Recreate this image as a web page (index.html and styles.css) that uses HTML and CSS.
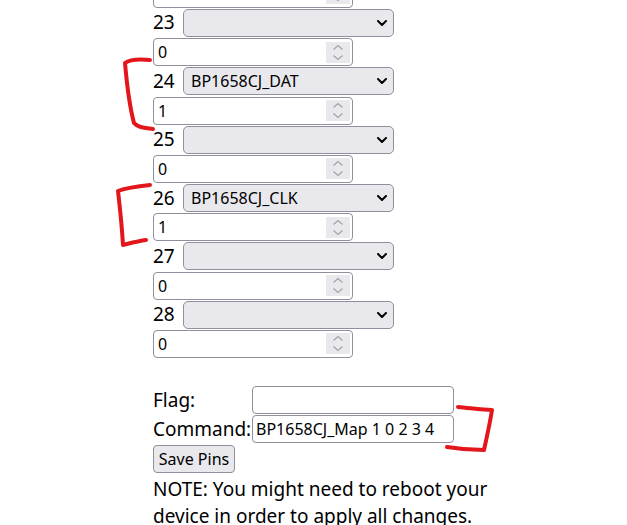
FILE: index.html
```html
<!DOCTYPE html>
<html>
  <head>
    <meta charset="UTF-8" />
    <title>Pins</title>
    <link rel="stylesheet" href="styles.css">
  </head>
  <body>
    <div class="page">
      <div class="pins">
        <div class="pin">
          <div class="pin-line">
            <span class="pin-num">22</span>
            <span class="select-wrap"><select class="role"><option></option></select><svg class="arrow" viewBox="0 0 10 6"><path d="M1 1l4 4 4-4" /></svg></span>
          </div>
          <div class="num-wrap"><input class="channel" type="text" value="0"><svg class="spin" viewBox="0 0 24 21"><path d="M7.5 7.5l4.5-4 4.5 4M7.5 13.5l4.5 4 4.5-4" /></svg></div>
        </div>
        <div class="pin">
          <div class="pin-line">
            <span class="pin-num">23</span>
            <span class="select-wrap"><select class="role"><option></option></select><svg class="arrow" viewBox="0 0 10 6"><path d="M1 1l4 4 4-4" /></svg></span>
          </div>
          <div class="num-wrap"><input class="channel" type="text" value="0"><svg class="spin" viewBox="0 0 24 21"><path d="M7.5 7.5l4.5-4 4.5 4M7.5 13.5l4.5 4 4.5-4" /></svg></div>
        </div>
        <div class="pin">
          <div class="pin-line">
            <span class="pin-num">24</span>
            <span class="select-wrap"><select class="role"><option>BP1658CJ_DAT</option></select><svg class="arrow" viewBox="0 0 10 6"><path d="M1 1l4 4 4-4" /></svg></span>
          </div>
          <div class="num-wrap"><input class="channel" type="text" value="1"><svg class="spin" viewBox="0 0 24 21"><path d="M7.5 7.5l4.5-4 4.5 4M7.5 13.5l4.5 4 4.5-4" /></svg></div>
        </div>
        <div class="pin">
          <div class="pin-line">
            <span class="pin-num">25</span>
            <span class="select-wrap"><select class="role"><option></option></select><svg class="arrow" viewBox="0 0 10 6"><path d="M1 1l4 4 4-4" /></svg></span>
          </div>
          <div class="num-wrap"><input class="channel" type="text" value="0"><svg class="spin" viewBox="0 0 24 21"><path d="M7.5 7.5l4.5-4 4.5 4M7.5 13.5l4.5 4 4.5-4" /></svg></div>
        </div>
        <div class="pin">
          <div class="pin-line">
            <span class="pin-num">26</span>
            <span class="select-wrap"><select class="role"><option>BP1658CJ_CLK</option></select><svg class="arrow" viewBox="0 0 10 6"><path d="M1 1l4 4 4-4" /></svg></span>
          </div>
          <div class="num-wrap"><input class="channel" type="text" value="1"><svg class="spin" viewBox="0 0 24 21"><path d="M7.5 7.5l4.5-4 4.5 4M7.5 13.5l4.5 4 4.5-4" /></svg></div>
        </div>
        <div class="pin">
          <div class="pin-line">
            <span class="pin-num">27</span>
            <span class="select-wrap"><select class="role"><option></option></select><svg class="arrow" viewBox="0 0 10 6"><path d="M1 1l4 4 4-4" /></svg></span>
          </div>
          <div class="num-wrap"><input class="channel" type="text" value="0"><svg class="spin" viewBox="0 0 24 21"><path d="M7.5 7.5l4.5-4 4.5 4M7.5 13.5l4.5 4 4.5-4" /></svg></div>
        </div>
        <div class="pin">
          <div class="pin-line">
            <span class="pin-num">28</span>
            <span class="select-wrap"><select class="role"><option></option></select><svg class="arrow" viewBox="0 0 10 6"><path d="M1 1l4 4 4-4" /></svg></span>
          </div>
          <div class="num-wrap"><input class="channel" type="text" value="0"><svg class="spin" viewBox="0 0 24 21"><path d="M7.5 7.5l4.5-4 4.5 4M7.5 13.5l4.5 4 4.5-4" /></svg></div>
        </div>
      </div>

      <div class="settings">
        <label class="field-label">Flag:</label>
        <input class="field" type="text" value="">
        <label class="field-label">Command:</label>
        <input class="field" type="text" value="BP1658CJ_Map 1 0 2 3 4">
      </div>
      <button class="save">Save Pins</button>
      <p class="note">NOTE: You might need to reboot your device in order to apply all changes.</p>
    </div>

    <!-- hand drawn marks on top of the form -->
    <svg class="marks" viewBox="0 0 627 525">
      <path d="M150 60C139 59 129 60 125 63C127 86 130 108 134 123C138 128 146 128 153 129" />
      <path d="M150 185C140 186 126 188 118 191C120 208 122 228 123 245C131 243 138 241 146 240" />
      <path d="M458 407C470 408 482 410 492 410C490 423 487 436 484 450C471 450 459 449 447 447" />
    </svg>
  </body>
</html>
```

FILE: styles.css
```css
body {
  margin: 0;
  font-family: 'Noto Sans', sans-serif;
  font-size: 19px;
  color: #000;
  background: #fff;
  overflow: hidden;
}
.page {
  padding-left: 153px;
}
.pins {
  margin-top: -50px;
}
.pin-line,
.num-wrap {
  height: 29.2px;
  display: flex;
  align-items: center;
}
.pin-num {
  width: 30px;
  line-height: 1;
}
.select-wrap {
  position: relative;
  display: block;
}
.role {
  appearance: none;
  display: block;
  width: 211px;
  height: 28px;
  padding: 0 30px 0 7px;
  font-family: 'Noto Sans', sans-serif;
  font-size: 16px;
  color: #000;
  background: #e9e9ed;
  border: 1px solid #8f8f9d;
  border-radius: 5px;
  outline: none;
}
.arrow {
  position: absolute;
  right: 7px;
  top: 11px;
  width: 10px;
  height: 6px;
  fill: none;
  stroke: #000;
  stroke-width: 2;
  stroke-linecap: round;
  stroke-linejoin: round;
}
.num-wrap {
  position: relative;
  width: 200px;
}
.channel {
  display: block;
  box-sizing: border-box;
  width: 200px;
  height: 28px;
  padding: 0 30px 0 4px;
  font-family: 'Noto Sans', sans-serif;
  font-size: 16px;
  color: #000;
  background: #fff;
  border: 1px solid #8f8f9d;
  border-radius: 4px;
  outline: none;
}
.spin {
  position: absolute;
  right: 3px;
  top: 4px;
  width: 24px;
  height: 21px;
  background: #e9e9ed;
  fill: none;
  stroke: #a3a3ae;
  stroke-width: 1.3;
}
.settings {
  display: grid;
  grid-template-columns: 99px 202px;
  grid-auto-rows: 29px;
  align-items: center;
  margin-top: 27px;
}
.field-label {
  white-space: nowrap;
}
.field {
  box-sizing: border-box;
  width: 202px;
  height: 28px;
  padding: 0 3px;
  font-family: 'Noto Sans', sans-serif;
  font-size: 16px;
  color: #000;
  border: 1px solid #8f8f9d;
  border-radius: 4px;
  outline: none;
}
.save {
  display: block;
  width: 82px;
  height: 28px;
  margin-top: 1px;
  padding: 0;
  font-family: 'Noto Sans', sans-serif;
  font-size: 16px;
  color: #000;
  background: #e9e9ed;
  border: 1px solid #8f8f9d;
  border-radius: 4px;
}
.note {
  width: 345px;
  margin: 3px 0 0;
  line-height: 27px;
}
.marks {
  position: absolute;
  left: 0;
  top: 0;
  width: 627px;
  height: 525px;
  pointer-events: none;
  fill: none;
  stroke: #e3161c;
  stroke-width: 4;
  stroke-linecap: round;
  stroke-linejoin: round;
}
```
